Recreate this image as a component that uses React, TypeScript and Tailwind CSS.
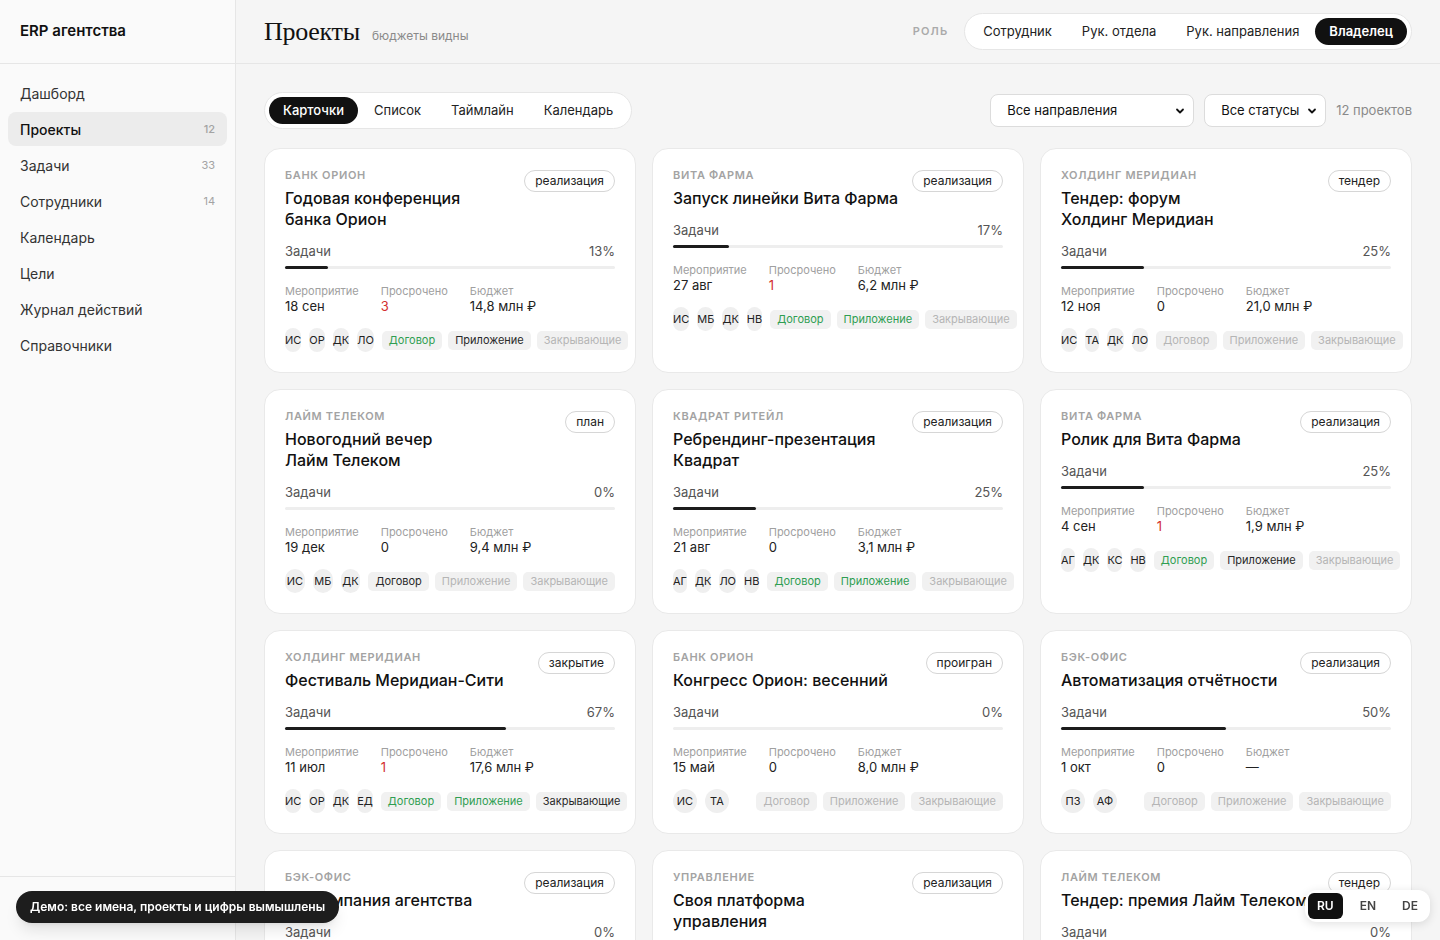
import React from 'react';

type DocState = 'done' | 'progress' | 'todo';

interface Project {
  client: string;
  title: string;
  status: string;
  progress: number;
  date: string;
  overdue: number;
  budget: string;
  team: string[];
  docs: DocState[];
}

const projects: Project[] = [
  {
    client: 'Банк Орион',
    title: 'Годовая конференция банка Орион',
    status: 'реализация',
    progress: 13,
    date: '18 сен',
    overdue: 3,
    budget: '14,8 млн ₽',
    team: ['ИС', 'ОР', 'ДК', 'ЛО'],
    docs: ['done', 'progress', 'todo'],
  },
  {
    client: 'Вита Фарма',
    title: 'Запуск линейки Вита Фарма',
    status: 'реализация',
    progress: 17,
    date: '27 авг',
    overdue: 1,
    budget: '6,2 млн ₽',
    team: ['ИС', 'МБ', 'ДК', 'НВ'],
    docs: ['done', 'done', 'todo'],
  },
  {
    client: 'Холдинг Меридиан',
    title: 'Тендер: форум Холдинг Меридиан',
    status: 'тендер',
    progress: 25,
    date: '12 ноя',
    overdue: 0,
    budget: '21,0 млн ₽',
    team: ['ИС', 'ТА', 'ДК', 'ЛО'],
    docs: ['todo', 'todo', 'todo'],
  },
  {
    client: 'Лайм Телеком',
    title: 'Новогодний вечер Лайм Телеком',
    status: 'план',
    progress: 0,
    date: '19 дек',
    overdue: 0,
    budget: '9,4 млн ₽',
    team: ['ИС', 'МБ', 'ДК'],
    docs: ['progress', 'todo', 'todo'],
  },
  {
    client: 'Квадрат Ритейл',
    title: 'Ребрендинг-презентация Квадрат',
    status: 'реализация',
    progress: 25,
    date: '21 авг',
    overdue: 0,
    budget: '3,1 млн ₽',
    team: ['АГ', 'ДК', 'ЛО', 'НВ'],
    docs: ['done', 'done', 'todo'],
  },
  {
    client: 'Вита Фарма',
    title: 'Ролик для Вита Фарма',
    status: 'реализация',
    progress: 25,
    date: '4 сен',
    overdue: 1,
    budget: '1,9 млн ₽',
    team: ['АГ', 'ДК', 'КС', 'НВ'],
    docs: ['done', 'progress', 'todo'],
  },
  {
    client: 'Холдинг Меридиан',
    title: 'Фестиваль Меридиан-Сити',
    status: 'закрытие',
    progress: 67,
    date: '11 июл',
    overdue: 1,
    budget: '17,6 млн ₽',
    team: ['ИС', 'ОР', 'ДК', 'ЕД'],
    docs: ['done', 'done', 'progress'],
  },
  {
    client: 'Банк Орион',
    title: 'Конгресс Орион: весенний',
    status: 'проигран',
    progress: 0,
    date: '15 май',
    overdue: 0,
    budget: '8,0 млн ₽',
    team: ['ИС', 'ТА'],
    docs: ['todo', 'todo', 'todo'],
  },
  {
    client: 'Бэк-офис',
    title: 'Автоматизация отчётности',
    status: 'реализация',
    progress: 50,
    date: '1 окт',
    overdue: 0,
    budget: '—',
    team: ['ПЗ', 'АФ'],
    docs: ['todo', 'todo', 'todo'],
  },
  {
    client: 'Бэк-офис',
    title: 'PR-кампания агентства',
    status: 'реализация',
    progress: 0,
    date: '2 дек',
    overdue: 0,
    budget: '—',
    team: ['ПЗ', 'ЛО'],
    docs: ['todo', 'todo', 'todo'],
  },
  {
    client: 'Управление',
    title: 'Своя платформа управления',
    status: 'реализация',
    progress: 0,
    date: '30 ноя',
    overdue: 0,
    budget: '—',
    team: ['ИС', 'АФ'],
    docs: ['todo', 'todo', 'todo'],
  },
  {
    client: 'Лайм Телеком',
    title: 'Тендер: премия Лайм Телеком',
    status: 'тендер',
    progress: 0,
    date: '5 фев',
    overdue: 0,
    budget: '12,5 млн ₽',
    team: ['ИС', 'ТА', 'МБ'],
    docs: ['todo', 'todo', 'todo'],
  },
];

const navItems = [
  { label: 'Дашборд' },
  { label: 'Проекты', count: 12, active: true },
  { label: 'Задачи', count: 33 },
  { label: 'Сотрудники', count: 14 },
  { label: 'Календарь' },
  { label: 'Цели' },
  { label: 'Журнал действий' },
  { label: 'Справочники' },
];

const docNames = ['Договор', 'Приложение', 'Закрывающие'];

const docColor = (state: DocState) => {
  if (state === 'done') return 'text-[#2f9e52]';
  if (state === 'progress') return 'text-[#2a2a2a]';
  return 'text-[#b5b5b5]';
};

const Chevron = () => (
  <svg width="10" height="10" viewBox="0 0 10 10" fill="none">
    <path
      d="M2 3.5L5 6.5L8 3.5"
      stroke="#111"
      strokeWidth="1.8"
      strokeLinecap="round"
      strokeLinejoin="round"
    />
  </svg>
);

// hyphenated words stay on one line, like in the design
const renderTitle = (title: string) =>
  title.split(' ').map((w, i) => (
    <React.Fragment key={i}>
      {i > 0 && ' '}
      {w.includes('-') ? <span className="whitespace-nowrap">{w}</span> : w}
    </React.Fragment>
  ));

const ProjectCard: React.FC<{ project: Project }> = ({ project }) => {
  return (
    <div className="flex flex-col rounded-2xl border border-[#e9e9e9] bg-white px-5 pb-5 pt-[19px]">
      <div className="flex items-start justify-between gap-3">
        <div className="min-w-0">
          <div className="text-[11px] font-semibold uppercase leading-[14px] tracking-[0.06em] text-[#a3a3a3]">
            {project.client}
          </div>
          <div className="mt-[6px] max-w-[255px] text-balance text-[16px] font-medium leading-[21px] text-[#111]">
            {renderTitle(project.title)}
          </div>
        </div>
        <span className="mt-[2px] shrink-0 rounded-full border border-[#d6d6d6] px-2.5 text-[12px] leading-[20px] text-[#222]">
          {project.status}
        </span>
      </div>

      <div className="mt-3 flex items-center justify-between text-[13px] leading-[18px] text-[#555]">
        <span>Задачи</span>
        <span>{project.progress}%</span>
      </div>
      <div className="mt-1.5 h-[3px] rounded-full bg-[#eeeeee]">
        <div
          className="h-full rounded-full bg-[#1c1c1c]"
          style={{ width: `${project.progress}%` }}
        ></div>
      </div>

      <div className="mt-[15px] flex gap-[22px]">
        <div className="flex flex-col">
          <span className="text-[11px] leading-[14px] text-[#a0a0a0]">
            Мероприятие
          </span>
          <span className="text-[13px] leading-4 text-[#222]">
            {project.date}
          </span>
        </div>
        <div className="flex flex-col">
          <span className="text-[11px] leading-[14px] text-[#a0a0a0]">
            Просрочено
          </span>
          <span
            className={`text-[13px] leading-4 ${
              project.overdue > 0 ? 'text-[#d32f2f]' : 'text-[#222]'
            }`}
          >
            {project.overdue}
          </span>
        </div>
        <div className="flex flex-col">
          <span className="text-[11px] leading-[14px] text-[#a0a0a0]">
            Бюджет
          </span>
          <span className="text-[13px] leading-4 text-[#222]">
            {project.budget}
          </span>
        </div>
      </div>

      <div className="mt-[14px] flex items-center gap-2">
        {project.team.map((t) => (
          <div
            key={t}
            className="flex h-6 w-6 items-center justify-center rounded-full bg-[#efefef] text-[11px] text-[#222]"
          >
            {t}
          </div>
        ))}
        <div className="ml-auto flex shrink-0 gap-1.5">
          {docNames.map((d, i) => (
            <span
              key={d}
              className={`whitespace-nowrap rounded-[5px] bg-[#f1f1f1] px-[7px] text-[11px] leading-[19px] ${docColor(
                project.docs[i]
              )}`}
            >
              {d}
            </span>
          ))}
        </div>
      </div>
    </div>
  );
};

export default function App() {
  return (
    <div
      className="flex h-screen w-full overflow-hidden bg-[#f5f5f5] text-[#111]"
      style={{ fontFamily: 'Inter, "Noto Sans", sans-serif' }}
    >
      {/* sidebar */}
      <aside className="flex w-[236px] shrink-0 flex-col border-r border-[#e6e6e6] bg-[#fafafa]">
        <div className="flex h-[64px] items-center border-b border-[#e6e6e6] px-5 text-[15px] font-semibold">
          ERP агентства
        </div>
        <nav className="flex flex-1 flex-col gap-0.5 px-2 pt-3">
          {navItems.map((item) => (
            <div
              key={item.label}
              className={`flex h-[34px] items-center justify-between rounded-lg px-3 text-[14px] ${
                item.active
                  ? 'bg-[#ececec] font-medium text-[#111]'
                  : 'text-[#333]'
              }`}
            >
              <span>{item.label}</span>
              {item.count && (
                <span className="text-[11px] text-[#a3a3a3]">{item.count}</span>
              )}
            </div>
          ))}
        </nav>
        <div className="h-[64px] border-t border-[#e6e6e6]"></div>
      </aside>

      {/* main */}
      <main className="flex min-w-0 flex-1 flex-col overflow-hidden">
        <header className="flex h-[64px] shrink-0 items-center justify-between border-b border-[#e6e6e6] px-7">
          <div className="flex items-baseline gap-3">
            <h1
              className="text-[26px] font-normal leading-none tracking-[-0.01em] text-[#111]"
              style={{ fontFamily: '"Liberation Serif", "DejaVu Serif", serif' }}
            >
              Проекты
            </h1>
            <span className="text-[12px] text-[#8a8a8a]">бюджеты видны</span>
          </div>
          <div className="flex items-center gap-4">
            <span className="text-[11px] font-semibold uppercase tracking-[0.1em] text-[#aaa]">
              Роль
            </span>
            <div className="flex items-center gap-0.5 rounded-full border border-[#e6e6e6] bg-white p-1">
              {['Сотрудник', 'Рук. отдела', 'Рук. направления', 'Владелец'].map(
                (r) => (
                  <span
                    key={r}
                    className={`rounded-full px-[14px] text-[13px] leading-[27px] ${
                      r === 'Владелец'
                        ? 'bg-[#111] font-semibold text-white'
                        : 'text-[#222]'
                    }`}
                  >
                    {r}
                  </span>
                )
              )}
            </div>
          </div>
        </header>

        <div className="flex-1 px-7 pt-7">
          <div className="mb-[19px] flex items-center justify-between">
            <div className="flex items-center gap-0.5 rounded-full border border-[#e6e6e6] bg-white p-1">
              {['Карточки', 'Список', 'Таймлайн', 'Календарь'].map((v) => (
                <span
                  key={v}
                  className={`rounded-full px-[14px] text-[13px] leading-[27px] ${
                    v === 'Карточки'
                      ? 'bg-[#111] font-medium text-white'
                      : 'text-[#222]'
                  }`}
                >
                  {v}
                </span>
              ))}
            </div>
            <div className="flex items-center gap-2.5">
              <div className="flex h-[33px] w-[204px] items-center justify-between rounded-lg border border-[#dcdcdc] bg-white pl-4 pr-2 text-[13px] text-[#111]">
                <span>Все направления</span>
                <Chevron />
              </div>
              <div className="flex h-[33px] w-[122px] items-center justify-between rounded-lg border border-[#dcdcdc] bg-white pl-4 pr-2 text-[13px] text-[#111]">
                <span>Все статусы</span>
                <Chevron />
              </div>
              <span className="text-[13px] text-[#8a8a8a]">12 проектов</span>
            </div>
          </div>

          <div className="grid grid-cols-3 gap-4">
            {projects.map((p) => (
              <ProjectCard key={p.title} project={p} />
            ))}
          </div>
        </div>
      </main>

      {/* demo toast */}
      <div className="fixed bottom-[17px] left-4 rounded-full bg-[#1d1d1d] px-[14px] text-[12px] font-semibold leading-8 text-white shadow-lg">
        Демо: все имена, проекты и цифры вымышлены
      </div>

      {/* language switch */}
      <div className="fixed bottom-[18px] right-[10px] flex items-center gap-2 rounded-xl bg-white p-[3px] shadow-[0_2px_10px_rgba(0,0,0,0.12)]">
        {['RU', 'EN', 'DE'].map((l) => (
          <span
            key={l}
            className={`rounded-md px-[9px] text-[12px] font-semibold leading-[26px] ${
              l === 'RU' ? 'bg-[#111] text-white' : 'text-[#444]'
            }`}
          >
            {l}
          </span>
        ))}
      </div>
    </div>
  );
}
